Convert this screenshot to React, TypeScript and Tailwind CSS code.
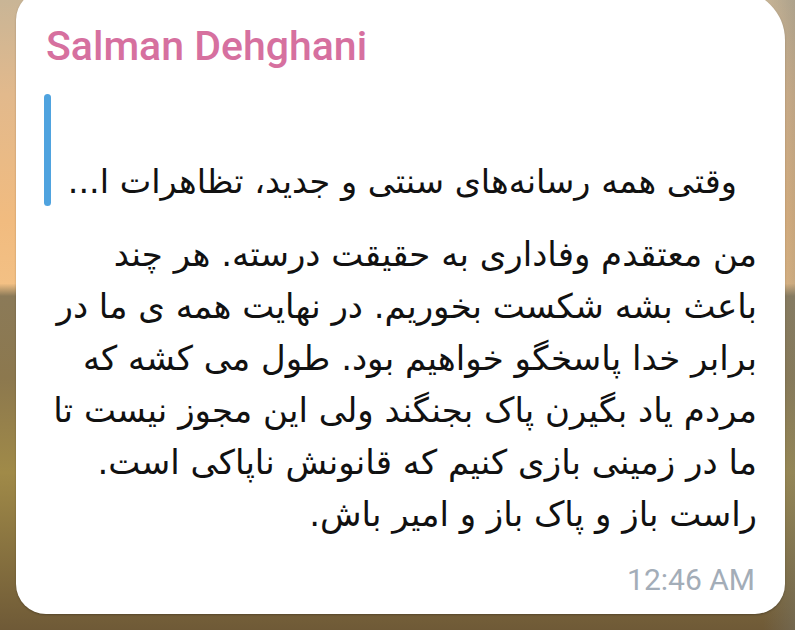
import React from "react";

const lines = [
  "من معتقدم وفاداری به حقیقت درسته. هر چند",
  "باعث بشه شکست بخوریم. در نهایت همه ی ما در",
  "برابر خدا پاسخگو خواهیم بود. طول می کشه که",
  "مردم یاد بگیرن پاک بجنگند ولی این مجوز نیست تا",
  "ما در زمینی بازی کنیم که قانونش ناپاکی است.",
  "راست باز و پاک باز و امیر باش.",
];

export default function App() {
  return (
    <div className="w-[795px] h-[630px] overflow-hidden flex flex-col bg-[linear-gradient(90deg,rgba(0,0,0,0)_96%,rgba(120,125,120,0.35)_100%),linear-gradient(180deg,#c9b596_0%,#e2b98c_15%,#f1bb7f_35%,#f3c084_45%,#8b7a58_47%,#8c784e_60%,#a08a48_75%,#6f5a37_100%)]">
      <div className="ml-[16px] mr-[10px] -mt-[10px] h-[624px] shrink-0 bg-white rounded-tl-[30px] rounded-tr-[50px] rounded-b-[30px] shadow-[0_1px_2px_rgba(0,0,0,0.25)] flex flex-col pl-[28px] pr-[28px] pt-[36px]">
        <div className="ml-[2px] font-['Roboto',sans-serif] font-medium text-[41px] leading-none text-[#d6709f]">
          Salman Dehghani
        </div>
        <div className="mt-[27px] flex flex-row h-[112px]">
          <div className="w-[7px] shrink-0 rounded-full bg-[#4fa3df]" />
          <div className="flex-1 flex flex-col pr-[20px]">
            <div className="h-[68px]" />
            <div
              dir="rtl"
              className="font-['DejaVu_Sans',sans-serif] text-[33.5px] leading-[40px] text-[#111] text-right whitespace-nowrap"
            >
              وقتی همه رسانه‌های سنتی و جدید، تظاهرات ا...
            </div>
          </div>
        </div>
        <div
          dir="rtl"
          className="mt-[22px] flex flex-col font-['DejaVu_Sans',sans-serif] text-[34px] leading-[52px] text-[#111]"
        >
          {lines.map((l, i) => (
            <div key={i} className="text-right whitespace-nowrap">
              {l}
            </div>
          ))}
        </div>
        <div className="mt-auto mb-[19px] pr-[2px] text-right font-['Roboto',sans-serif] text-[30px] leading-none text-[#a3adb8]">
          12:46 AM
        </div>
      </div>
    </div>
  );
}
